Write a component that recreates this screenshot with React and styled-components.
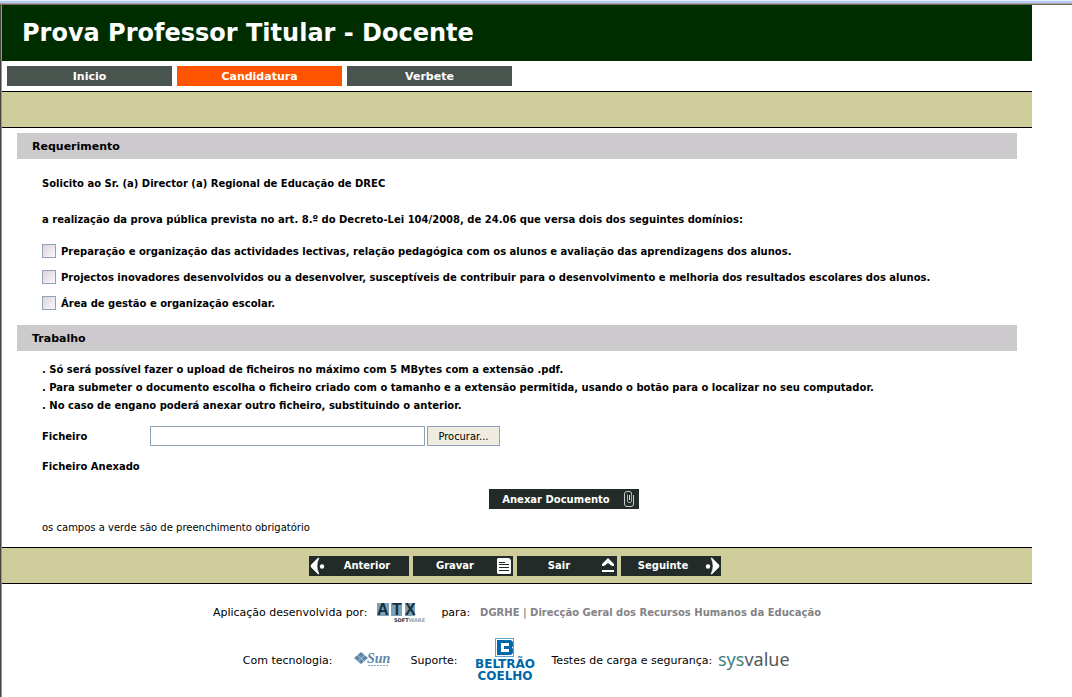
import React, { useState } from "react";
import styled, { createGlobalStyle } from "styled-components";

const GlobalStyle = createGlobalStyle`
  * {
    box-sizing: border-box;
  }
  body {
    margin: 0;
    background: #ffffff;
    color: #000000;
    font-family: Verdana, "DejaVu Sans", sans-serif;
    font-size: 11px;
  }
`;

const Frame = styled.div`
  min-height: 100vh;
  border-left: 2px groove #9a968a;
`;
const FrameTop = styled.div`
  height: 5px;
  margin-left: -2px;
  background: linear-gradient(
    #e6eefc 1px,
    #b4cbf6 1px 3px,
    #a8a498 3px 4px,
    #716f64 4px
  );
`;
const Page = styled.div`
  margin-right: 40px;
`;

const Header = styled.header`
  display: flex;
  align-items: center;
  height: 56px;
  padding: 0 20px;
  background: #002d00;
`;
const Title = styled.h1`
  margin: 0;
  color: #ffffff;
  font-size: 24px;
`;

const Tabs = styled.nav`
  display: flex;
  gap: 5px;
  padding: 5px;
`;
const Tab = styled.a`
  width: 165px;
  height: 20px;
  background: ${(props) => (props.$active ? "#ff5500" : "#4a544f")};
  color: #ffffff;
  font-size: 11px;
  font-weight: bold;
  line-height: 22px;
  text-align: center;
  text-decoration: none;
`;

const Band = styled.div`
  display: flex;
  align-items: center;
  justify-content: center;
  gap: 4px;
  height: 37px;
  padding-right: 4px;
  border-top: 1px solid #000000;
  border-bottom: 1px solid #000000;
  background: #cfcd9b;
`;

const Section = styled.section`
  padding: 0 15px;
`;
const SectionTitle = styled.h2`
  margin: 0;
  padding: 2px 15px 0;
  background: #cdcacd;
  font-size: 11px;
  line-height: 24px;
`;
const Content = styled.div`
  padding: ${(props) => props.$padding || "0 25px"};
`;
const Paragraph = styled.p`
  margin: 0;
  font-size: 10px;
  font-weight: bold;
  line-height: ${(props) => (props.$loose ? "36px" : "18px")};
`;
const Option = styled.label`
  display: flex;
  align-items: center;
  gap: 5px;
  height: 26px;
  font-size: 10px;
  font-weight: bold;
`;
const CheckBox = styled.input`
  appearance: none;
  width: 14px;
  height: 14px;
  margin: 0;
  border: 1px solid #8fa3b8;
  background: linear-gradient(135deg, #dcd6dc, #fbf6fb);
  &:checked {
    background: #4a544f;
  }
`;

const Field = styled.div`
  display: flex;
  align-items: center;
  height: 30px;
  font-size: 10px;
  font-weight: bold;
`;
const FieldLabel = styled.label`
  width: 108px;
`;
const FileName = styled.input`
  width: 275px;
  height: 20px;
  margin-right: 2px;
  border: 1px solid #8fa3b8;
  background: #ffffff;
`;
const Browse = styled.button`
  width: 73px;
  height: 20px;
  padding: 0;
  border: 1px solid #8fa3b8;
  background: #efebde;
  color: #000000;
  font-family: Tahoma, "DejaVu Sans Condensed", sans-serif;
  font-size: 11px;
`;

const AttachRow = styled.div`
  display: flex;
  justify-content: center;
  padding: 8px 0 9px 94px;
`;
const DarkButton = styled.button`
  display: flex;
  align-items: center;
  flex-direction: ${(props) => (props.$iconLeft ? "row-reverse" : "row")};
  width: ${(props) => (props.$wide ? "150px" : "100px")};
  height: 20px;
  padding: 0 1px;
  border: 0;
  background: #222b28;
  color: #ffffff;
  font-family: inherit;
  font-size: 10px;
  font-weight: bold;
  line-height: 14px;
`;
const ButtonText = styled.span`
  flex: 1;
  padding-top: 1px;
  text-align: center;
`;
const Note = styled.p`
  margin: 0;
  font-size: 10px;
  line-height: 20px;
`;

const Footer = styled.footer`
  padding-top: 9px;
`;
const FooterRow = styled.div`
  display: flex;
  align-items: center;
  justify-content: center;
  height: ${(props) => props.$height};
  gap: ${(props) => props.$gap};
  svg {
    flex: none;
  }
`;
const Partner = styled.div`
  display: flex;
  align-items: center;
  gap: 5px;
`;
const Client = styled.strong`
  color: #848284;
  font-size: 10px;
`;

const ArrowLeftIcon = () => (
  <svg width="16" height="18" viewBox="0 0 16 18" aria-hidden="true">
    <path d="M8 1 H9 Q5 9 9 17 H8 L1 10 V8 Z" fill="#fff" stroke="#fff" strokeWidth="0.5" />
    <circle cx="12" cy="9.5" r="2.2" fill="#fff" />
  </svg>
);

const ArrowRightIcon = () => (
  <svg width="16" height="18" viewBox="0 0 16 18" aria-hidden="true">
    <path d="M8 1 H7 Q11 9 7 17 H8 L15 10 V8 Z" fill="#fff" stroke="#fff" strokeWidth="0.5" />
    <circle cx="4" cy="9.5" r="2.2" fill="#fff" />
  </svg>
);

const SaveIcon = () => (
  <svg width="16" height="18" viewBox="0 0 16 18" aria-hidden="true">
    <path d="M2 1 H13 L15 3 V16 L14 17 H2 L1 16 V2 Z" fill="#fff" />
    <path
      d="M3 5.5 H9 M3 7.5 H13 M3 10.5 H13 M3 13.5 H13"
      stroke="#222b28"
      strokeWidth="1"
    />
  </svg>
);

const ExitIcon = () => (
  <svg width="16" height="18" viewBox="0 0 16 18" aria-hidden="true">
    <path d="M8 1 L14 7 V9 H12 L8 6 L4 9 H2 V7 Z" fill="#fff" />
    <path d="M2 13 H14 V15 H2 Z" fill="#fff" />
  </svg>
);

const ClipIcon = () => (
  <svg width="16" height="18" viewBox="0 0 16 18" aria-hidden="true">
    <path
      d="M9.5 3 V11 Q9.5 12.5 8 12.5 H6.5 Q5.5 12.5 5.5 11 V4.5"
      fill="none"
      stroke="#a9aeac"
    />
    <path
      d="M9.5 4.5 V3.5 Q9.5 1.5 7 1.5 H5 Q2.5 1.5 2.5 4 V14 Q2.5 16.5 5 16.5 H9 Q11.5 16.5 11.5 14 V5"
      fill="none"
      stroke="#c9cdcb"
    />
    <path d="M7.5 5 V10" stroke="#dfe2e0" />
  </svg>
);

const AtxLogo = () => (
  <svg width="54" height="22" viewBox="0 0 54 22" role="img" aria-label="ATX Software">
    <rect x="0" y="2" width="12" height="13" fill="#7da2b6" />
    <rect x="14" y="2" width="11" height="13" fill="#7da2b6" />
    <rect x="28" y="2" width="10" height="13" fill="#7da2b6" />
    <g fontFamily="Liberation Sans, sans-serif" fontWeight="bold" fontSize="16" fill="#17303f">
      <text x="0" y="14">A</text>
      <text x="15" y="14">T</text>
      <text x="28" y="14">X</text>
    </g>
    <text x="17" y="21" fontFamily="DejaVu Sans, sans-serif" fontWeight="bold" fontSize="5" fill="#17303f">
      SOFT<tspan fill="#8eabba">WARE</tspan>
    </text>
  </svg>
);

const SunLogo = () => (
  <svg width="46" height="22" viewBox="0 0 46 22" role="img" aria-label="Sun Microsystems">
    <path d="M12 3 L19 9 L12 15 L5 9 Z" fill="#5f87a8" />
    <path
      d="M8 6 L15 12 M16 6 L9 12"
      stroke="#c5d5e2"
      strokeWidth="0.8"
    />
    <text x="18" y="14" fontFamily="Liberation Serif, serif" fontStyle="italic" fontWeight="bold" fontSize="14" fill="#5f87a8">
      Sun
    </text>
    <path d="M19 16.5 H40" stroke="#87a5bd" strokeDasharray="2 1" />
  </svg>
);

const BeltraoLogo = () => (
  <svg width="62" height="44" viewBox="0 0 62 44" role="img" aria-label="Beltrão Coelho">
    <rect x="21.5" y="0.5" width="18" height="18" fill="#fff" stroke="#5fa5d0" />
    <path
      d="M23 2 H37 L39 4 V8 L38 9.5 L39 11 V15 L37 17 H23 Z M27 5 V14 H35 V11 H30 V8 H35 V5 Z"
      fill="#0067a8"
      fillRule="evenodd"
    />
    <g fontFamily="DejaVu Sans, sans-serif" fontWeight="bold" fontSize="12" fill="#0067a8" textAnchor="middle">
      <text x="31" y="30">BELTRÃO</text>
      <text x="31" y="42">COELHO</text>
    </g>
  </svg>
);

const SysvalueLogo = () => (
  <svg width="74" height="24" viewBox="0 0 74 24" role="img" aria-label="sysvalue">
    <text x="1" y="18" fontFamily="Noto Sans, sans-serif" fontSize="18" fill="#55595c">
      <tspan fill="#3f7f84">sys</tspan>value
    </text>
  </svg>
);

const domains = [
  "Preparação e organização das actividades lectivas, relação pedagógica com os alunos e avaliação das aprendizagens dos alunos.",
  "Projectos inovadores desenvolvidos ou a desenvolver, susceptíveis de contribuir para o desenvolvimento e melhoria dos resultados escolares dos alunos.",
  "Área de gestão e organização escolar.",
];

const App = () => {
  const [fileName, setFileName] = useState("");

  return (
    <>
      <GlobalStyle />
      <Frame>
        <FrameTop />
        <Page>
          <Header>
            <Title>Prova Professor Titular - Docente</Title>
          </Header>
          <Tabs>
            <Tab href="#inicio">Inicio</Tab>
            <Tab href="#candidatura" $active>
              Candidatura
            </Tab>
            <Tab href="#verbete">Verbete</Tab>
          </Tabs>
          <Band />

          <main>
            <Content $padding="5px 0 0">
              <Section>
                <SectionTitle>Requerimento</SectionTitle>
                <Content $padding="7px 25px 9px">
                  <Paragraph $loose>
                    Solicito ao Sr. (a) Director (a) Regional de Educação de DREC
                  </Paragraph>
                  <Paragraph $loose>
                    a realização da prova pública prevista no art. 8.º do
                    Decreto-Lei 104/2008, de 24.06 que versa dois dos seguintes
                    domínios:
                  </Paragraph>
                  {domains.map((domain) => (
                    <Option key={domain}>
                      <CheckBox type="checkbox" />
                      {domain}
                    </Option>
                  ))}
                </Content>
              </Section>

              <Section>
                <SectionTitle>Trabalho</SectionTitle>
                <Content $padding="10px 25px 9px">
                  <Paragraph>
                    . Só será possível fazer o upload de ficheiros no máximo com
                    5 MBytes com a extensão .pdf.
                  </Paragraph>
                  <Paragraph>
                    . Para submeter o documento escolha o ficheiro criado com o
                    tamanho e a extensão permitida, usando o botão para o
                    localizar no seu computador.
                  </Paragraph>
                  <Paragraph>
                    . No caso de engano poderá anexar outro ficheiro,
                    substituindo o anterior.
                  </Paragraph>
                  <Content $padding="6px 0 0">
                    <Field>
                      <FieldLabel htmlFor="ficheiro">Ficheiro</FieldLabel>
                      <FileName
                        id="ficheiro"
                        type="text"
                        value={fileName}
                        onChange={(e) => setFileName(e.target.value)}
                      />
                      <Browse type="button">Procurar...</Browse>
                    </Field>
                    <Field>Ficheiro Anexado</Field>
                  </Content>
                  <AttachRow>
                    <DarkButton type="button" $wide>
                      <ButtonText>Anexar Documento</ButtonText>
                      <ClipIcon />
                    </DarkButton>
                  </AttachRow>
                  <Note>os campos a verde são de preenchimento obrigatório</Note>
                </Content>
              </Section>
            </Content>
          </main>

          <Band>
            <DarkButton type="button" $iconLeft>
              <ButtonText>Anterior</ButtonText>
              <ArrowLeftIcon />
            </DarkButton>
            <DarkButton type="button">
              <ButtonText>Gravar</ButtonText>
              <SaveIcon />
            </DarkButton>
            <DarkButton type="button">
              <ButtonText>Sair</ButtonText>
              <ExitIcon />
            </DarkButton>
            <DarkButton type="button">
              <ButtonText>Seguinte</ButtonText>
              <ArrowRightIcon />
            </DarkButton>
          </Band>

          <Footer>
            <FooterRow $height="38px" $gap="10px">
              <span>Aplicação desenvolvida por:</span>
              <AtxLogo />
              <span>para:</span>
              <Client>DGRHE | Direcção Geral dos Recursos Humanos da Educação</Client>
            </FooterRow>
            <FooterRow $height="58px" $gap="16px">
              <span>Com tecnologia:</span>
              <SunLogo />
              <span>Suporte:</span>
              <BeltraoLogo />
              <Partner>
                <span>Testes de carga e segurança:</span>
                <SysvalueLogo />
              </Partner>
            </FooterRow>
          </Footer>
        </Page>
      </Frame>
    </>
  );
};

export default App;
